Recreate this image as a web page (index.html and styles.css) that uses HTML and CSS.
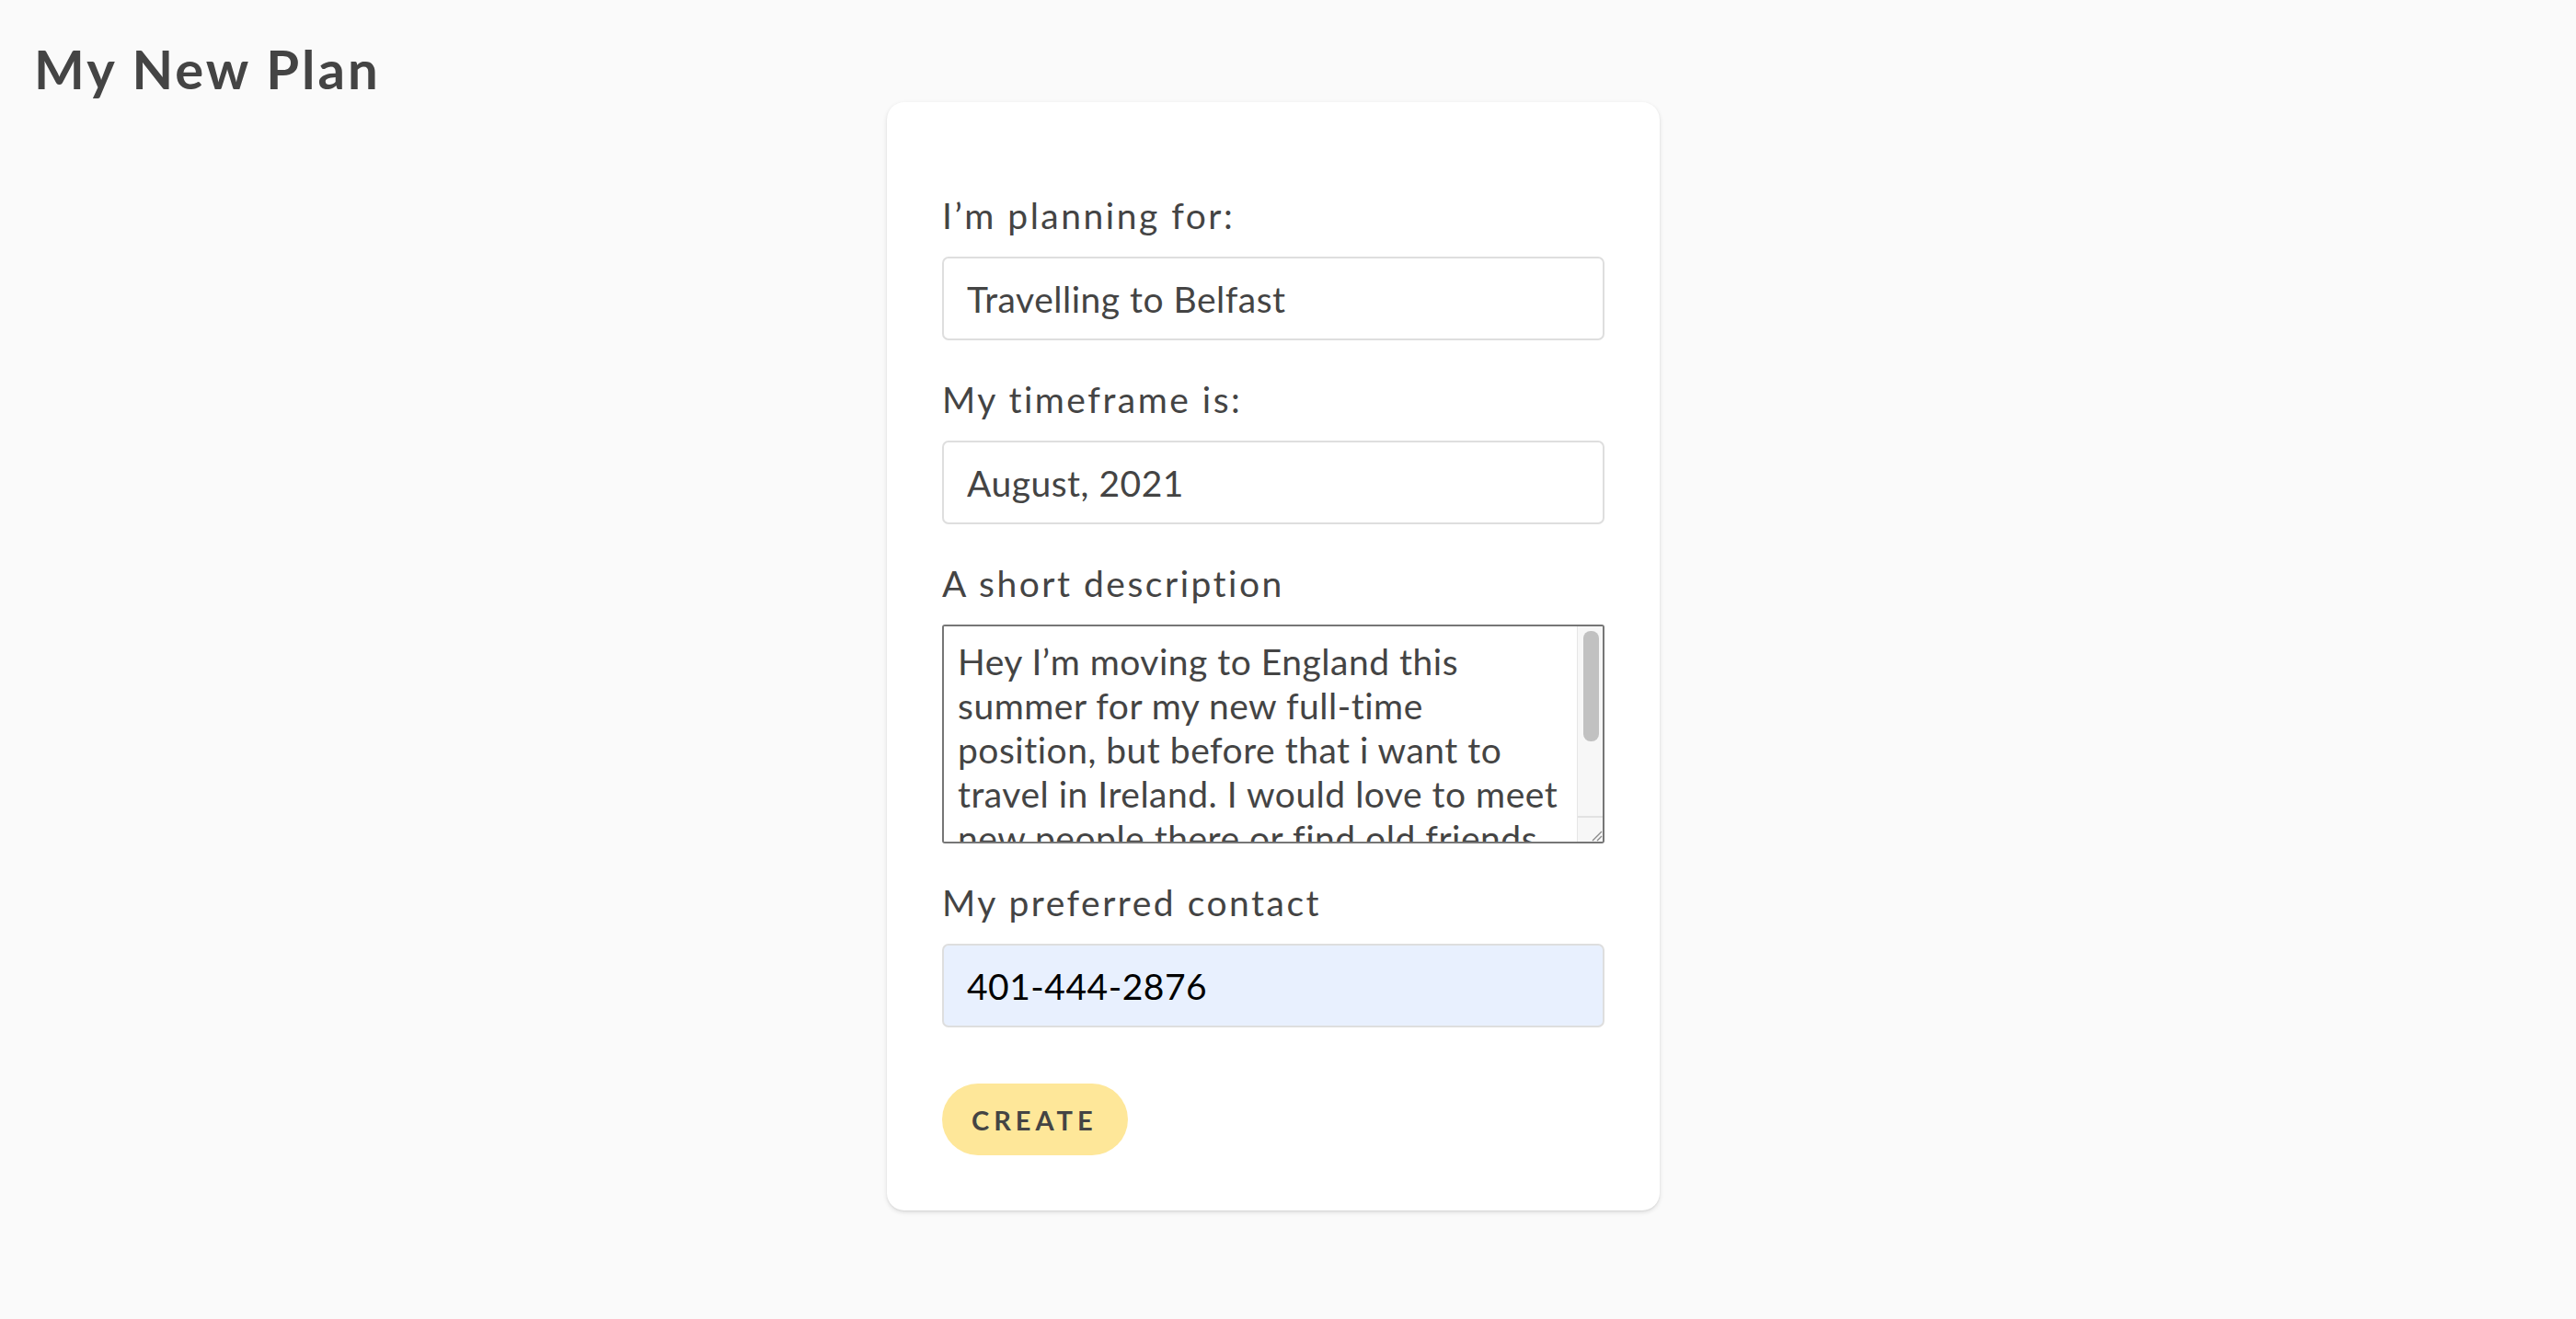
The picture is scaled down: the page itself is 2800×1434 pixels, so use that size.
FILE: index.html
```html
<!DOCTYPE html>
<html lang="en">
<head>
<meta charset="utf-8">
<title>My New Plan</title>
<link rel="stylesheet" href="styles.css">
</head>
<body>
<header class="page-header">
  <h1 class="page-title">My New Plan</h1>
</header>
<main class="page-main">
  <form class="plan-card">
    <div class="field">
      <label class="field-label" for="plan">I’m planning for:</label>
      <input class="field-input" id="plan" type="text" value="Travelling to Belfast">
    </div>
    <div class="field">
      <label class="field-label" for="time">My timeframe is:</label>
      <input class="field-input" id="time" type="text" value="August, 2021">
    </div>
    <div class="field">
      <label class="field-label" for="desc">A short description</label>
      <div class="textarea-box">
        <textarea class="field-textarea" id="desc">Hey I’m moving to England this summer for my new full-time position, but before that i want to travel in Ireland. I would love to meet new people there or find old friends who live around Belfast. Let me know if you would like to join me!</textarea>
        <div class="fake-scrollbar" aria-hidden="true">
          <div class="fake-track">
            <div class="fake-thumb"></div>
          </div>
          <div class="fake-corner">
            <svg class="grip" width="14" height="14" viewBox="0 0 14 14">
              <path d="M13 3 L3 13 M13 8 L8 13" stroke="#8a8a8a" stroke-width="1.4" fill="none"/>
            </svg>
          </div>
        </div>
      </div>
    </div>
    <div class="field field-last">
      <label class="field-label" for="contact">My preferred contact</label>
      <input class="field-input field-autofill" id="contact" type="text" value="401-444-2876">
    </div>
    <button class="create-btn" type="button">Create</button>
  </form>
</main>
</body>
</html>
```

FILE: styles.css
```css
* {
  box-sizing: border-box;
}

html,
body {
  margin: 0;
  padding: 0;
  background: #fafafa;
}

body {
  font-family: "Lato", "Noto Sans", sans-serif;
  color: #444;
}

.page-header {
  padding: 40px 0 0 37px;
}

.page-title {
  margin: 0;
  font-size: 58px;
  line-height: 70px;
  font-weight: 700;
  color: #444;
  letter-spacing: 3px;
}

.page-main {
  display: flex;
  justify-content: center;
  padding: 1px 32px 60px 0;
}

.plan-card {
  width: 840px;
  background: #fff;
  border-radius: 19px;
  box-shadow: 0 2px 5px rgba(0, 0, 0, 0.12), 0 1px 2px rgba(0, 0, 0, 0.06);
  padding: 99px 60px 60px;
  display: flex;
  flex-direction: column;
  align-items: flex-start;
}

.field {
  width: 100%;
  display: flex;
  flex-direction: column;
  margin-bottom: 40px;
}

.field-last {
  margin-bottom: 61px;
}

.field-label {
  font-size: 39px;
  line-height: 48px;
  letter-spacing: 2.5px;
  color: #444;
  margin-bottom: 21px;
}

.field-input {
  width: 100%;
  height: 91px;
  border: 2px solid #dedede;
  border-radius: 7px;
  padding: 0 25px;
  font-family: inherit;
  font-size: 39px;
  letter-spacing: 0.5px;
  color: #444;
  background: #fff;
  outline: none;
}

.field-autofill {
  background: #e8f0fe;
  color: #000;
}

.textarea-box {
  width: 100%;
  height: 238px;
  border: 2px solid #767676;
  border-radius: 3px;
  display: flex;
  overflow: hidden;
  background: #fff;
}

.field-textarea {
  flex: 1;
  min-width: 0;
  height: 100%;
  border: none;
  padding: 14px 15px;
  font-family: inherit;
  font-size: 39px;
  line-height: 48px;
  letter-spacing: 0.5px;
  color: #444;
  background: #fff;
  resize: none;
  overflow: hidden;
  outline: none;
}

.fake-scrollbar {
  width: 28px;
  flex: none;
  display: flex;
  flex-direction: column;
  background: #f7f7f7;
  border-left: 1px solid #e6e6e6;
}

.fake-track {
  flex: 1;
  padding: 5px 4px 0 6px;
}

.fake-thumb {
  height: 120px;
  border-radius: 8px;
  background: #c1c1c1;
}

.fake-corner {
  height: 28px;
  border-top: 2px solid #e2e2e2;
  display: flex;
  align-items: flex-end;
  justify-content: flex-end;
}

.grip {
  display: block;
}

.create-btn {
  height: 78px;
  padding: 0 33px 0 32px;
  border: none;
  border-radius: 39px;
  background: #fee799;
  color: #444;
  font-family: inherit;
  font-size: 29px;
  font-weight: 700;
  letter-spacing: 5px;
  text-transform: uppercase;
  cursor: pointer;
}
```
